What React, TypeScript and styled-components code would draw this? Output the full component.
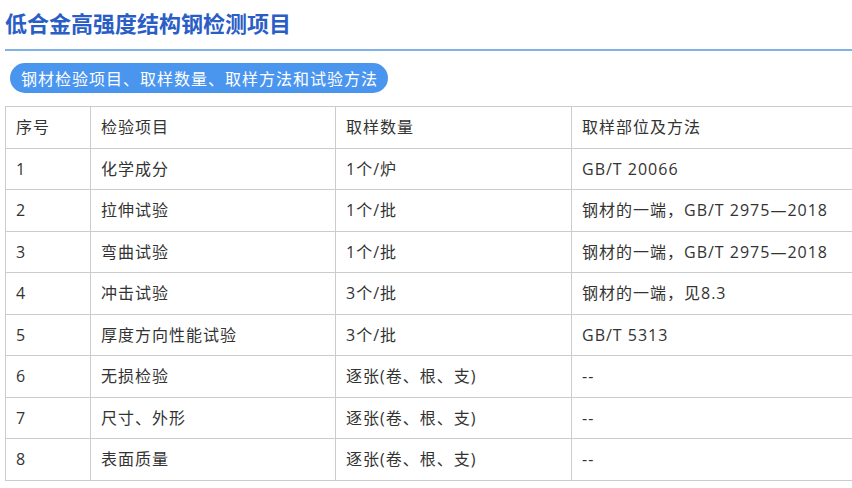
import React from "react";
import styled, { createGlobalStyle } from "styled-components";

const GlobalStyle = createGlobalStyle`
  html, body {
    margin: 0;
    padding: 0;
    background: #ffffff;
    overflow: hidden;
  }
  body {
    font-family: "Open Sans", "Noto Sans CJK SC", sans-serif;
    color: #333333;
  }
`;

const Page = styled.div`
  width: 852px;
  height: 488px;
  overflow: hidden;
  padding-left: 5px;
  box-sizing: border-box;
`;

const Header = styled.div`
  width: 1000px;
  padding: 6px 0 10px;
  border-bottom: 2px solid #80b2ea;
`;

const Title = styled.h1`
  margin: 0;
  font-family: "Noto Sans CJK SC", sans-serif;
  font-size: 22px;
  font-weight: 700;
  line-height: 33px;
  letter-spacing: 0;
  color: #2a5ec6;
`;

const Pill = styled.div`
  display: inline-block;
  margin: 12px 0 0 5px;
  height: 30px;
  padding: 0 10px 0 11px;
  border-radius: 15px;
  background: #4a96ef;
  color: #ffffff;
  font-family: "Noto Sans CJK SC", sans-serif;
  font-size: 16px;
  line-height: 30px;
  letter-spacing: 1px;
  white-space: nowrap;
`;

const Table = styled.table`
  margin-top: 13px;
  border-collapse: collapse;
  table-layout: fixed;
  width: 967px;
`;

const Col = styled.col<{ $w: number }>`
  width: ${(p) => p.$w}px;
`;

const Cell = styled.td`
  border: 1px solid #cccccc;
  padding: 8px 10px;
  font-size: 16px;
  line-height: 24.5px;
  letter-spacing: 1px;
  color: #333333;
  white-space: nowrap;
  text-align: left;
  font-weight: 400;
`;

const widths = [85, 245, 236, 401];

const rows: [string, string, string, string][] = [
  ["序号", "检验项目", "取样数量", "取样部位及方法"],
  ["1", "化学成分", "1个/炉", "GB/T 20066"],
  ["2", "拉伸试验", "1个/批", "钢材的一端，GB/T 2975—2018"],
  ["3", "弯曲试验", "1个/批", "钢材的一端，GB/T 2975—2018"],
  ["4", "冲击试验", "3个/批", "钢材的一端，见8.3"],
  ["5", "厚度方向性能试验", "3个/批", "GB/T 5313"],
  ["6", "无损检验", "逐张(卷、根、支)", "--"],
  ["7", "尺寸、外形", "逐张(卷、根、支)", "--"],
  ["8", "表面质量", "逐张(卷、根、支)", "--"],
];

export default function App() {
  return (
    <Page>
      <GlobalStyle />
      <Header>
        <Title>低合金高强度结构钢检测项目</Title>
      </Header>
      <Pill>钢材检验项目、取样数量、取样方法和试验方法</Pill>
      <Table>
        <colgroup>
          {widths.map((w, i) => (
            <Col key={i} $w={w} />
          ))}
        </colgroup>
        <tbody>
          {rows.map((r, i) => (
            <tr key={i}>
              {r.map((c, j) => (
                <Cell key={j}>{c}</Cell>
              ))}
            </tr>
          ))}
        </tbody>
      </Table>
    </Page>
  );
}
